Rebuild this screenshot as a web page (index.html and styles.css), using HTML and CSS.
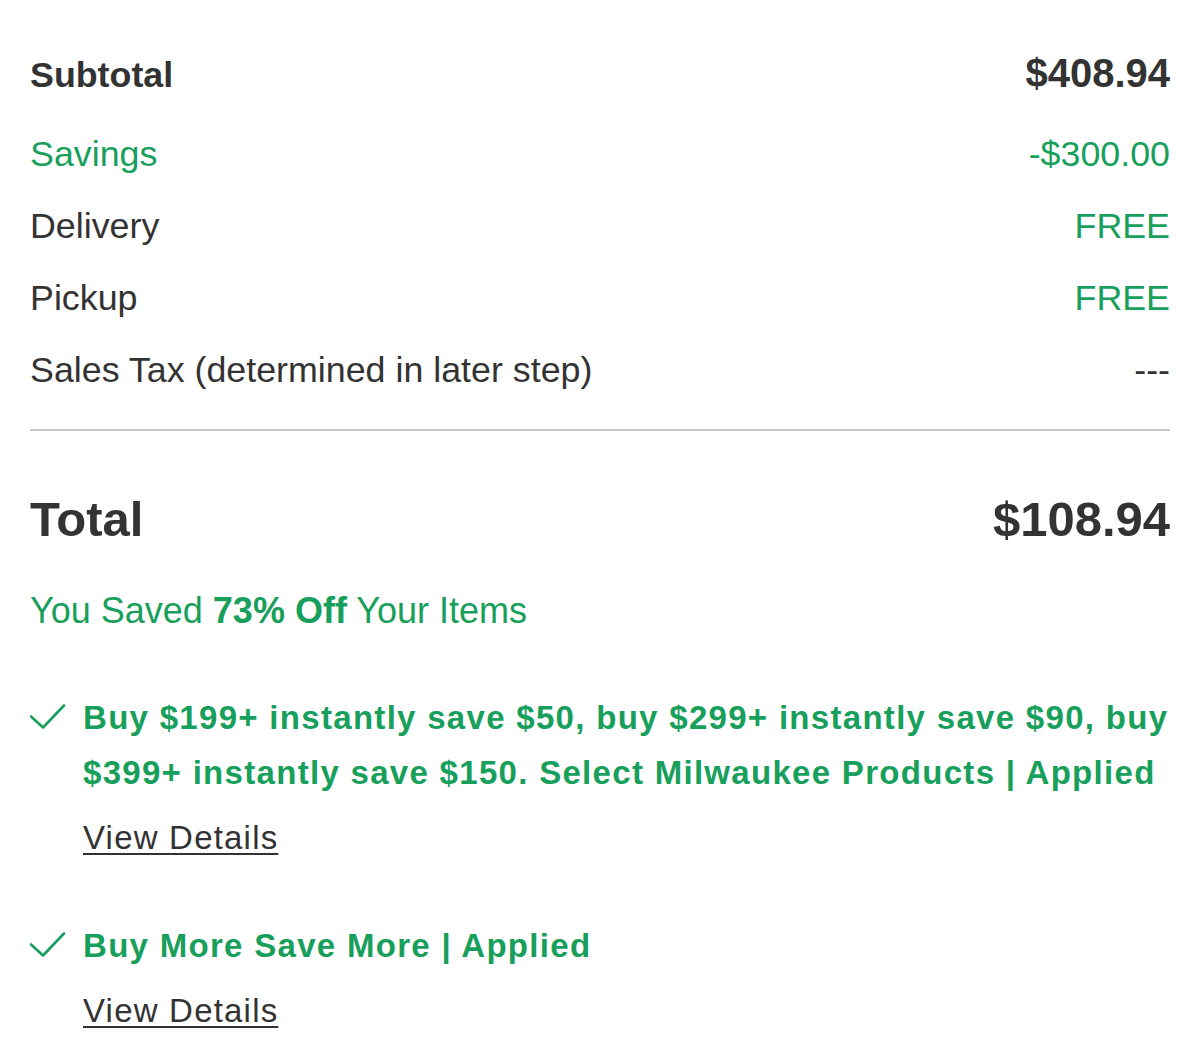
FILE: index.html
```html
<!DOCTYPE html>
<html lang="en">
<head>
<meta charset="utf-8">
<title>Order Summary</title>
<link rel="stylesheet" href="styles.css">
</head>
<body>
<main class="summary">
  <div class="row row-subtotal">
    <span class="label-bold">Subtotal</span>
    <span class="value-bold">$408.94</span>
  </div>
  <div class="row green">
    <span>Savings</span>
    <span>-$300.00</span>
  </div>
  <div class="row">
    <span>Delivery</span>
    <span class="green">FREE</span>
  </div>
  <div class="row">
    <span>Pickup</span>
    <span class="green">FREE</span>
  </div>
  <div class="row">
    <span>Sales Tax (determined in later step)</span>
    <span>---</span>
  </div>
  <hr class="divider">
  <div class="row row-total">
    <span>Total</span>
    <span>$108.94</span>
  </div>
  <div class="saved">You Saved <strong>73% Off</strong> Your Items</div>

  <div class="promo promo-first">
    <svg class="check" width="36" height="26" viewBox="0 0 36 26" aria-hidden="true">
      <polyline points="1,12.5 13,23.5 34,1.5" fill="none" stroke="#179f5b" stroke-width="2.6" stroke-linecap="round" stroke-linejoin="round"/>
    </svg>
    <div class="promo-body">
      <div class="promo-text">Buy $199+ instantly save $50, buy $299+ instantly save $90, buy $399+ instantly save $150. Select Milwaukee Products | Applied</div>
      <a class="details" href="#">View Details</a>
    </div>
  </div>

  <div class="promo promo-second">
    <svg class="check" width="36" height="26" viewBox="0 0 36 26" aria-hidden="true">
      <polyline points="1,12.5 13,23.5 34,1.5" fill="none" stroke="#179f5b" stroke-width="2.6" stroke-linecap="round" stroke-linejoin="round"/>
    </svg>
    <div class="promo-body">
      <div class="promo-text">Buy More Save More | Applied</div>
      <a class="details" href="#">View Details</a>
    </div>
  </div>
</main>
</body>
</html>
```

FILE: styles.css
```css
html, body {
  margin: 0;
  padding: 0;
  background: #ffffff;
}

body {
  font-family: "Liberation Sans", Arial, sans-serif;
  color: #333333;
}

.summary {
  padding: 37px 27px 0 30px;
}

.row {
  display: flex;
  justify-content: space-between;
  align-items: baseline;
  font-size: 35.8px;
  line-height: 72px;
}

.row-subtotal {
  margin-bottom: 7px;
}

.label-bold {
  font-weight: 700;
}

.value-bold {
  font-weight: 700;
  font-size: 40px;
}

.green {
  color: #179f5b;
}

.divider {
  border: 0;
  height: 2px;
  background: #c8c8c8;
  margin: 23px 0 0;
}

.row-total {
  font-size: 49px;
  font-weight: 700;
  margin-top: 52px;
}

.saved {
  font-size: 36px;
  line-height: 72px;
  color: #179f5b;
  margin-top: 20px;
}

.saved strong {
  font-weight: 700;
}

.promo {
  display: flex;
  align-items: flex-start;
  gap: 17px;
  margin-right: -24px;
}

.promo-first {
  margin-top: 43px;
}

.promo-second {
  margin-top: 53px;
}

.check {
  flex: none;
  margin-top: 14px;
}

.promo-body {
  flex: 1;
  min-width: 0;
}

.promo-text {
  font-size: 33px;
  font-weight: 700;
  line-height: 55px;
  letter-spacing: 1.3px;
  color: #179f5b;
}

.details {
  display: inline-block;
  margin-top: 10px;
  font-size: 33px;
  line-height: 55px;
  letter-spacing: 1.2px;
  color: #333333;
  text-decoration: underline;
  text-decoration-thickness: 2px;
  text-underline-offset: 4px;
}
```
